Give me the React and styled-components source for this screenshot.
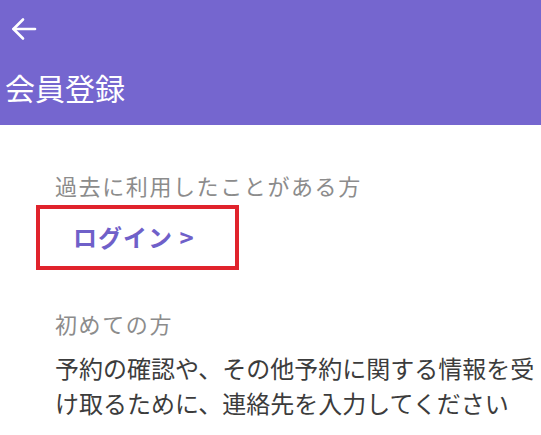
import React from 'react'
import styled, { createGlobalStyle } from 'styled-components'

const GlobalStyle = createGlobalStyle`
    body {
        margin: 0;
        background: #ffffff;
        font-family: "Noto Sans CJK JP", "Noto Sans", sans-serif;
    }
`
const Page = styled.div`
    display: flex;
    flex-direction: column;
    width: 541px;
`
const Header = styled.header`
    height: 125px;
    box-sizing: border-box;
    background-color: #7566cf;
    display: flex;
    flex-direction: column;
    padding: 14px 0 0 8px;
`
const BackButton = styled.button`
    width: 32px;
    height: 30px;
    padding: 0;
    border: none;
    background: transparent;
    display: flex;
    align-items: center;
    justify-content: center;
    cursor: pointer;
`
const Title = styled.h1`
    margin: 24px 0 0 -3px;
    font-size: 30px;
    line-height: 38px;
    font-weight: 400;
    letter-spacing: 0;
    color: #ffffff;
`
const Main = styled.main`
    display: flex;
    flex-direction: column;
    align-items: flex-start;
    padding: 45px 0 0 55px;
`
const Label = styled.div`
    font-size: 22px;
    line-height: 30px;
    letter-spacing: 1.6px;
    color: #8c8c8c;
    margin-top: ${(props) => props.top || 0}px;
`
const LoginBox = styled.a`
    margin: 5px 0 0 -19px;
    width: 203px;
    height: 65px;
    box-sizing: border-box;
    border: 4px solid #e0232c;
    display: flex;
    align-items: center;
    padding: 0 0 2px 33px;
    font-size: 24px;
    font-weight: 700;
    letter-spacing: 1px;
    color: #6f60c9;
    text-decoration: none;
    cursor: pointer;
`
const Description = styled.p`
    margin: 12px 0 0 0;
    width: 486px;
    font-size: 24px;
    line-height: 35px;
    letter-spacing: 0;
    color: #3c3c3c;
`

const App = () => {
  return (
    <Page>
        <GlobalStyle />
        <Header>
            <BackButton aria-label="戻る">
                <svg width="26" height="24" viewBox="0 0 26 24" fill="none" stroke="#ffffff" strokeWidth="2.6" strokeLinecap="round" strokeLinejoin="round">
                    <path d="M24 12H2.5" />
                    <path d="M12 2.5L2.5 12L12 21.5" />
                </svg>
            </BackButton>
            <Title>会員登録</Title>
        </Header>
        <Main>
            <Label>過去に利用したことがある方</Label>
            <LoginBox>ログイン &gt;</LoginBox>
            <Label top={38}>初めての方</Label>
            <Description>予約の確認や、その他予約に関する情報を受け取るために、連絡先を入力してください</Description>
        </Main>
    </Page>
  )
}

export default App
